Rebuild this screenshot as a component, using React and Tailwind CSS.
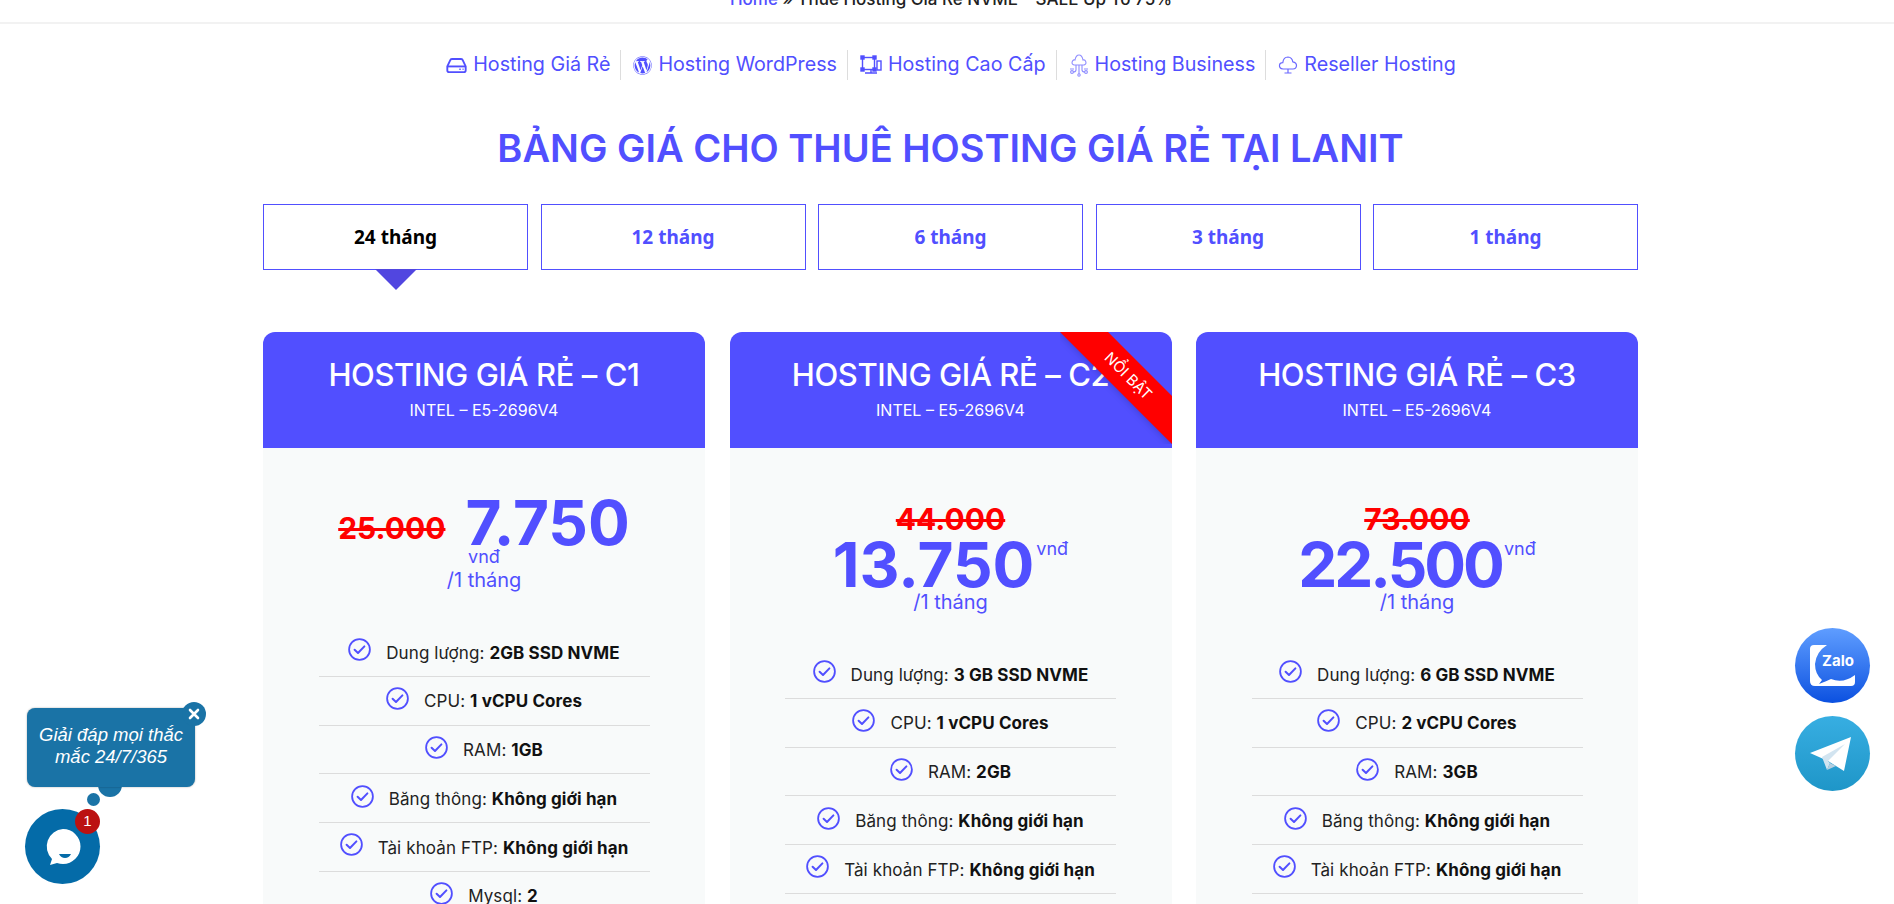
import React from 'react';
import { FaWordpress } from 'react-icons/fa';

const DriveIcon = () => (
  <svg width="21" height="15" viewBox="0 0 22 16" fill="none" stroke="#514fff" strokeWidth="2">
    <path d="M1.2 9 L4.5 2 Q5 1 6.5 1 H15.5 Q17 1 17.5 2 L20.8 9 V13 Q20.8 15 19 15 H3 Q1.2 15 1.2 13 Z" />
    <path d="M1.2 9 H20.8" />
    <path d="M14 12 H15.5 M17.5 12 H18.5" strokeWidth="1.6" />
  </svg>
);

const ServerIcon = () => (
  <svg width="22" height="20" viewBox="0 0 22 20" fill="none" stroke="#514fff" strokeWidth="1.4">
    <rect x="2.5" y="2.5" width="12" height="12" />
    <rect x="1" y="1" width="3" height="3" fill="#514fff" />
    <rect x="13" y="1" width="3" height="3" fill="#514fff" />
    <rect x="1" y="13" width="3" height="3" fill="#514fff" />
    <rect x="13" y="13" width="3" height="3" fill="#514fff" />
    <rect x="17" y="6" width="4" height="9" />
    <path d="M5 18 H17 M11 15 V18" />
  </svg>
);

const BusinessIcon = () => (
  <svg width="20" height="24" viewBox="0 0 20 24" fill="none" stroke="#8f8dff" strokeWidth="1.1">
    <path d="M5 12 Q2 11 3.5 8 Q4.5 6.5 6 7 Q7 2 10 2 Q13 2 14 7 Q16 6.5 16.5 8 Q18 11 15 12 Z" />
    <path d="M10 12 V21 M7 12 V17 Q7 19 4 19 M13 12 V17 Q13 19 16 19" />
    <circle cx="3" cy="19" r="1.4" />
    <circle cx="17" cy="19" r="1.4" />
    <circle cx="10" cy="22" r="1.2" />
    <path d="M1 16 H5 M15 16 H19" />
  </svg>
);

const CloudIcon = () => (
  <svg width="20" height="20" viewBox="0 0 20 20" fill="none" stroke="#6b69ff" strokeWidth="1.2">
    <path d="M5 14 Q1 13.5 1.5 10 Q2 7.5 4.8 7.6 Q5.5 2 10 2 Q14 2.2 14.8 6.8 Q18.5 7.5 18.5 10.5 Q18.3 14 15 14 Z" />
    <path d="M10 14 V18 M6.5 18 H13.5" />
  </svg>
);

const CheckIcon = () => (
  <svg width="23" height="23" viewBox="0 0 23 23" fill="none" stroke="#514fff" strokeWidth="1.8" className="mb-[7px] shrink-0">
    <circle cx="11.5" cy="11.5" r="10.4" />
    <path d="M6.6 11.8 L10 15 L16.4 8.4" strokeWidth="2" strokeLinecap="round" strokeLinejoin="round" />
  </svg>
);

const navItems = [
  { icon: <DriveIcon />, label: 'Hosting Giá Rẻ' },
  { icon: <FaWordpress size={19} color="#514fff" />, label: 'Hosting WordPress' },
  { icon: <ServerIcon />, label: 'Hosting Cao Cấp' },
  { icon: <BusinessIcon />, label: 'Hosting Business' },
  { icon: <CloudIcon />, label: 'Reseller Hosting' },
];

const tabs = ['24 tháng', '12 tháng', '6 tháng', '3 tháng', '1 tháng'];

const plans = [
  {
    name: 'HOSTING GIÁ RẺ – C1',
    oldPrice: '25.000',
    price: '7.750',
    inline: true,
    features: [
      ['Dung lượng:', '2GB SSD NVME'],
      ['CPU:', '1 vCPU Cores'],
      ['RAM:', '1GB'],
      ['Băng thông:', 'Không giới hạn'],
      ['Tài khoản FTP:', 'Không giới hạn'],
      ['Mysql:', '2'],
    ],
  },
  {
    name: 'HOSTING GIÁ RẺ – C2',
    oldPrice: '44.000',
    price: '13.750',
    ribbon: true,
    features: [
      ['Dung lượng:', '3 GB SSD NVME'],
      ['CPU:', '1 vCPU Cores'],
      ['RAM:', '2GB'],
      ['Băng thông:', 'Không giới hạn'],
      ['Tài khoản FTP:', 'Không giới hạn'],
      ['Mysql:', '3'],
    ],
  },
  {
    name: 'HOSTING GIÁ RẺ – C3',
    oldPrice: '73.000',
    price: '22.500',
    priceClass: 'tracking-[-3px]',
    features: [
      ['Dung lượng:', '6 GB SSD NVME'],
      ['CPU:', '2 vCPU Cores'],
      ['RAM:', '3GB'],
      ['Băng thông:', 'Không giới hạn'],
      ['Tài khoản FTP:', 'Không giới hạn'],
      ['Mysql:', '5'],
    ],
  },
];

const PlanCard = ({ plan }) => (
  <div className="relative">
    <div className="relative h-[116px] rounded-t-xl bg-[#514fff] text-center text-white overflow-hidden">
      <h3 className="pt-[24px] text-[31px] leading-[38px] font-medium tracking-[-0.4px]">{plan.name}</h3>
      <p className="mt-[6px] text-[16px] leading-[20px]">INTEL – E5-2696V4</p>
      {plan.ribbon && (
        <div className="absolute top-0 right-0 w-[112px] h-[112px] overflow-hidden">
          <div className="absolute left-[-12px] top-[27px] w-[160px] h-[34px] rotate-45 bg-[#ff0000] text-[15px] leading-[34px] text-center shadow-md">
            NỔI BẬT
          </div>
        </div>
      )}
    </div>
    <div className="bg-[#f8fafa] h-[600px]">
      {plan.inline ? (
        <div className="h-[180px] pt-[39px] text-center">
          <div className="flex justify-center items-baseline gap-[20px] h-[72px]">
            <span className="text-[30px] leading-[40px] font-bold text-[#ff0000] line-through -translate-y-[6px]">{plan.oldPrice}</span>
            <span className="text-[62px] leading-[72px] font-bold text-[#514fff]">{plan.price}</span>
          </div>
          <div className="text-[18px] leading-[20px] text-[#514fff] -mt-[12px]">vnđ</div>
          <div className="text-[20px] leading-[26px] text-[#514fff]">/1 tháng</div>
        </div>
      ) : (
        <div className="h-[202px] pt-[51px] text-center">
          <div className="text-[30px] leading-[40px] font-bold text-[#ff0000] line-through">{plan.oldPrice}</div>
          <div className="flex justify-center items-start h-[51px]">
            <span className={`text-[62px] leading-[52px] font-bold text-[#514fff] ${plan.priceClass || ''}`}>{plan.price}</span>
            <span className="text-[18px] leading-[20px] text-[#514fff] ml-[2px]">vnđ</span>
          </div>
          <div className="text-[20px] leading-[26px] text-[#514fff] mt-[-1px]">/1 tháng</div>
        </div>
      )}
      <ul className="w-[331px] mx-auto">
        {plan.features.map(([label, value]) => (
          <li key={label} className="h-[48.75px] pt-[3px] flex items-center justify-center gap-[15px] border-b border-[#dcdcdc] text-[17px] tracking-[0.1px] text-[#222]">
            <CheckIcon />
            <span>
              {label} <b className="font-bold text-[#111]">{value}</b>
            </span>
          </li>
        ))}
      </ul>
    </div>
  </div>
);

const App = () => {
  return (
    <div className="relative h-[904px] w-[1894px] overflow-hidden bg-white font-['Inter','Noto_Sans',sans-serif]">
      <div className="h-[24px] border-b-2 border-[#f2f2f2] flex items-end justify-center pl-[8px]">
        <p className="text-[17px] leading-[24px] mb-[11px] whitespace-nowrap font-medium text-[#222]">
          <span className="text-[#514fff]">Home</span> » Thuê Hosting Giá Rẻ NVME – SALE Up To 75%
        </p>
      </div>

      <nav className="mt-[26px] h-[30px] flex justify-center pl-[8px]">
        {navItems.map((item, i) => (
          <div key={item.label} className={`flex items-center gap-[6px] pr-[10px] ${i > 0 ? 'pl-[12px] border-l border-[#dddddd]' : 'pl-[10px]'}`}>
            {item.icon}
            <span className="text-[19.7px] text-[#514fff] whitespace-nowrap">{item.label}</span>
          </div>
        ))}
      </nav>

      <div className="ml-[263px] w-[1375px]">
        <h2 className="mt-[43px] text-center text-[38px] leading-[50px] font-semibold text-[#514fff]">
          BẢNG GIÁ CHO THUÊ HOSTING GIÁ RẺ TẠI LANIT
        </h2>

        <div className="mt-[31px] flex gap-[12.5px] font-['Noto_Sans',sans-serif]">
          {tabs.map((t, i) => (
            <div key={t} className="relative flex-1 h-[66px] pt-[1px] border border-[#514fff] flex items-center justify-center">
              <span className={`text-[19px] font-bold ${i === 0 ? 'text-black' : 'text-[#514fff]'}`}>{t}</span>
              {i === 0 && (
                <div className="absolute left-1/2 top-full -translate-x-1/2 w-0 h-0 border-l-[21px] border-r-[21px] border-t-[21px] border-l-transparent border-r-transparent border-t-[#5146e0]" />
              )}
            </div>
          ))}
        </div>

        <div className="mt-[62px] grid grid-cols-3 gap-[24.5px]">
          {plans.map(p => (
            <PlanCard key={p.name} plan={p} />
          ))}
        </div>
      </div>

      {/* floating zalo / telegram */}
      <div className="absolute left-[1795px] top-[628px] flex flex-col gap-[13px]">
        <div className="relative w-[75px] h-[75px] rounded-full bg-gradient-to-b from-[#5f9dff] to-[#0a50e0]">
          <svg width="75" height="75" viewBox="0 0 75 75" className="absolute inset-0">
            <path d="M19 17 H32 Q21 24 20 36 Q20 46 27 52 L24 56 Q32 53 36 51 Q48 56 60 47 V54 Q60 58 56 58 H20 Q15 58 15 53 V21 Q15 17 19 17 Z" fill="#fff" />
          </svg>
          <span className="absolute left-[27px] top-[23px] text-[15px] leading-[20px] font-bold text-white font-['Inter',sans-serif]">Zalo</span>
        </div>
        <div className="w-[75px] h-[75px] rounded-full bg-gradient-to-b from-[#37aee2] to-[#1e96c8]">
          <svg width="75" height="75" viewBox="0 0 75 75">
            <path d="M15 37 L56 21 L49 55 L33 45 Z" fill="#fff" />
            <path d="M27 41 L32 54 L35 47 L33 45 L50 28 Z" fill="#d2e4f0" />
            <path d="M32 54 L35 47 L41 50 Z" fill="#b5cfe0" />
          </svg>
        </div>
      </div>

      {/* chat widget */}
      <div className="absolute left-[98px] top-[773px] w-[24px] h-[24px] rounded-full bg-[#1a73a6]" />
      <div className="absolute left-[87px] top-[793px] w-[13px] h-[13px] rounded-full bg-[#1a73a6]" />
      <div className="absolute left-[27px] top-[708px] w-[168px] h-[79px] rounded-lg bg-[#1a73a6] shadow-[0_0_2px_rgba(0,0,0,0.35)] flex items-center justify-center text-center text-white italic text-[18.5px] leading-[22px] font-['Liberation_Sans',sans-serif] pb-[4px]">
        Giải đáp mọi thắc<br />mắc 24/7/365
      </div>
      <div className="absolute left-[182px] top-[702px] w-[24px] h-[24px] rounded-full bg-[#1a73a6] flex items-center justify-center">
        <svg width="12" height="12" viewBox="0 0 12 12" stroke="#fff" strokeWidth="2.6" strokeLinecap="round">
          <path d="M2 2 L10 10 M10 2 L2 10" />
        </svg>
      </div>
      <div className="absolute left-[25px] top-[809px] w-[75px] h-[75px] rounded-full bg-[#046ba8] flex items-center justify-center">
        <svg width="40" height="40" viewBox="0 0 40 40">
          <path d="M20 2 A17.5 17.5 0 1 1 20 37 Q17 37 14 36 L7 38 L9 32 A17.5 17.5 0 0 1 20 2 Z" fill="#fff" />
          <path d="M16 27 H28 Q26 31 22 31 Q18 31 16 27 Z" fill="#046ba8" />
        </svg>
      </div>
      <div className="absolute left-[75px] top-[809px] w-[25px] h-[25px] rounded-full bg-[#bb1111] flex items-center justify-center text-white text-[15px] font-['Liberation_Sans',sans-serif]">
        1
      </div>
    </div>
  );
};

export default App;
